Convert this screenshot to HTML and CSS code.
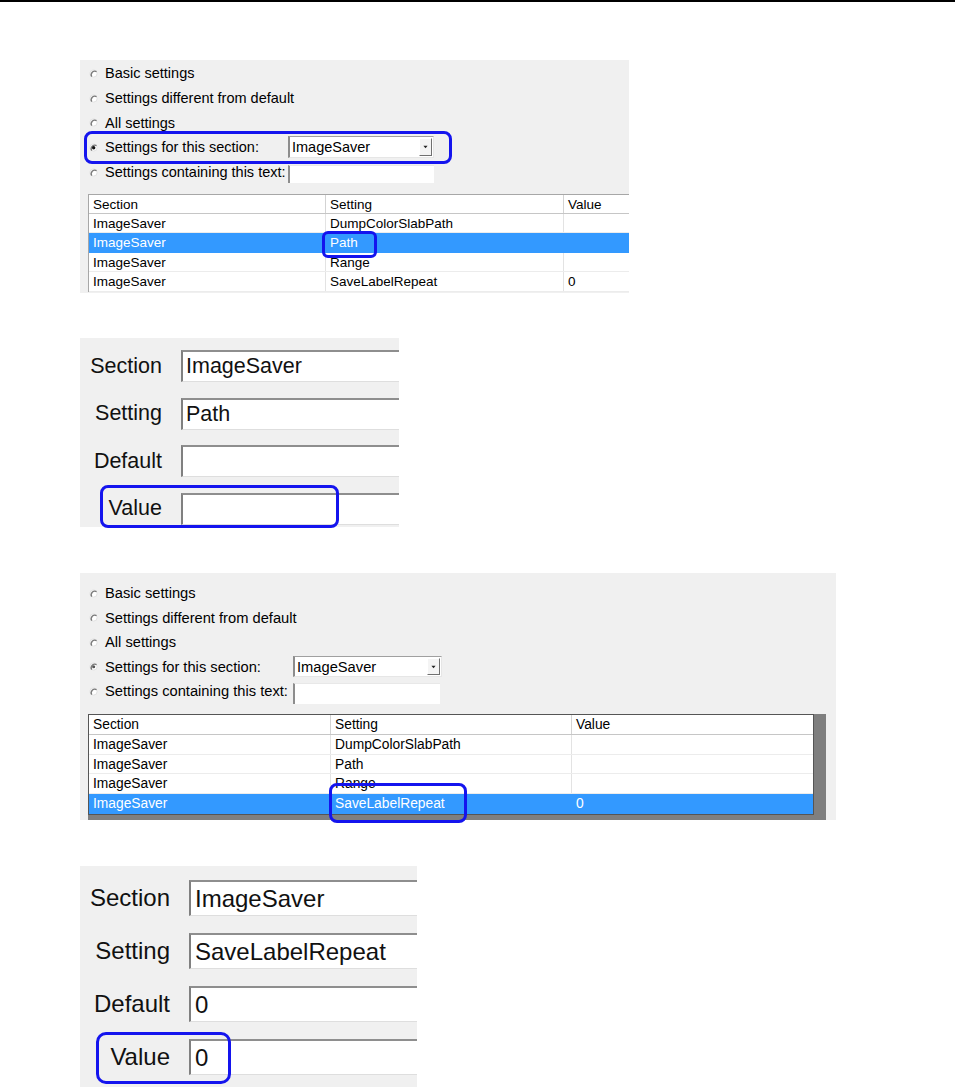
FILE: index.html
```html
<!DOCTYPE html>
<html lang="en">
<head>
<meta charset="utf-8">
<title>Settings</title>
<link rel="stylesheet" href="styles.css">
</head>
<body>
<div class="rule"></div>
<main class="page">

  <section class="panel list-panel p1">
    <ul class="radios">
      <li class="radio-row"><svg class="radio" viewBox="0 0 10 10"><circle cx="5" cy="5" r="4" fill="#fff" stroke="#e0e0e0"/><path d="M3 8.5A4 4 0 0 1 8.4 3" fill="none" stroke="#7a7a7a" stroke-width="1.5"/></svg><span>Basic settings</span></li>
      <li class="radio-row"><svg class="radio" viewBox="0 0 10 10"><circle cx="5" cy="5" r="4" fill="#fff" stroke="#e0e0e0"/><path d="M3 8.5A4 4 0 0 1 8.4 3" fill="none" stroke="#7a7a7a" stroke-width="1.5"/></svg><span>Settings different from default</span></li>
      <li class="radio-row"><svg class="radio" viewBox="0 0 10 10"><circle cx="5" cy="5" r="4" fill="#fff" stroke="#e0e0e0"/><path d="M3 8.5A4 4 0 0 1 8.4 3" fill="none" stroke="#7a7a7a" stroke-width="1.5"/></svg><span>All settings</span></li>
      <li class="radio-row"><svg class="radio" viewBox="0 0 10 10"><circle cx="5" cy="5" r="4" fill="#fff" stroke="#e0e0e0"/><path d="M3 8.5A4 4 0 0 1 8.4 3" fill="none" stroke="#7a7a7a" stroke-width="1.5"/><circle cx="5.2" cy="5.2" r="1.9" fill="#111"/></svg><span class="rlabel">Settings for this section:</span><div class="combo"><span class="combo-text">ImageSaver</span><span class="combo-btn"><svg viewBox="0 0 6 4"><path d="M0.5 0.5h5L3 3.5z" fill="#222"/></svg></span></div></li>
      <li class="radio-row"><svg class="radio" viewBox="0 0 10 10"><circle cx="5" cy="5" r="4" fill="#fff" stroke="#e0e0e0"/><path d="M3 8.5A4 4 0 0 1 8.4 3" fill="none" stroke="#7a7a7a" stroke-width="1.5"/></svg><span class="rlabel">Settings containing this text:</span><div class="textbox"></div></li>
    </ul>
    <div class="listview">
      <div class="lv-row lv-head"><span>Section</span><span>Setting</span><span>Value</span></div>
      <div class="lv-row"><span>ImageSaver</span><span>DumpColorSlabPath</span><span></span></div>
      <div class="lv-row selected"><span>ImageSaver</span><span>Path</span><span></span></div>
      <div class="lv-row"><span>ImageSaver</span><span>Range</span><span></span></div>
      <div class="lv-row"><span>ImageSaver</span><span>SaveLabelRepeat</span><span>0</span></div>
    </div>
    <div class="mark mark-p1-combo"></div>
    <div class="mark mark-p1-path"></div>
  </section>

  <section class="panel field-panel p2">
    <label class="flabel">Section</label><div class="field">ImageSaver</div>
    <label class="flabel">Setting</label><div class="field">Path</div>
    <label class="flabel">Default</label><div class="field"></div>
    <label class="flabel">Value</label><div class="field"></div>
    <div class="mark mark-p2"></div>
  </section>

  <section class="panel list-panel p3">
    <ul class="radios">
      <li class="radio-row"><svg class="radio" viewBox="0 0 10 10"><circle cx="5" cy="5" r="4" fill="#fff" stroke="#e0e0e0"/><path d="M3 8.5A4 4 0 0 1 8.4 3" fill="none" stroke="#7a7a7a" stroke-width="1.5"/></svg><span>Basic settings</span></li>
      <li class="radio-row"><svg class="radio" viewBox="0 0 10 10"><circle cx="5" cy="5" r="4" fill="#fff" stroke="#e0e0e0"/><path d="M3 8.5A4 4 0 0 1 8.4 3" fill="none" stroke="#7a7a7a" stroke-width="1.5"/></svg><span>Settings different from default</span></li>
      <li class="radio-row"><svg class="radio" viewBox="0 0 10 10"><circle cx="5" cy="5" r="4" fill="#fff" stroke="#e0e0e0"/><path d="M3 8.5A4 4 0 0 1 8.4 3" fill="none" stroke="#7a7a7a" stroke-width="1.5"/></svg><span>All settings</span></li>
      <li class="radio-row"><svg class="radio" viewBox="0 0 10 10"><circle cx="5" cy="5" r="4" fill="#fff" stroke="#e0e0e0"/><path d="M3 8.5A4 4 0 0 1 8.4 3" fill="none" stroke="#7a7a7a" stroke-width="1.5"/><circle cx="5.2" cy="5.2" r="1.7" fill="#555"/></svg><span class="rlabel">Settings for this section:</span><div class="combo"><span class="combo-text">ImageSaver</span><span class="combo-btn"><svg viewBox="0 0 6 4"><path d="M0.5 0.5h5L3 3.5z" fill="#222"/></svg></span></div></li>
      <li class="radio-row"><svg class="radio" viewBox="0 0 10 10"><circle cx="5" cy="5" r="4" fill="#fff" stroke="#e0e0e0"/><path d="M3 8.5A4 4 0 0 1 8.4 3" fill="none" stroke="#7a7a7a" stroke-width="1.5"/></svg><span class="rlabel">Settings containing this text:</span><div class="textbox"></div></li>
    </ul>
    <div class="listview">
      <div class="lv-inner">
        <div class="lv-row lv-head"><span>Section</span><span>Setting</span><span>Value</span></div>
        <div class="lv-row"><span>ImageSaver</span><span>DumpColorSlabPath</span><span></span></div>
        <div class="lv-row"><span>ImageSaver</span><span>Path</span><span></span></div>
        <div class="lv-row"><span>ImageSaver</span><span>Range</span><span></span></div>
        <div class="lv-row selected"><span>ImageSaver</span><span>SaveLabelRepeat</span><span>0</span></div>
      </div>
    </div>
    <div class="mark mark-p3"></div>
  </section>

  <section class="panel field-panel p4">
    <label class="flabel">Section</label><div class="field">ImageSaver</div>
    <label class="flabel">Setting</label><div class="field">SaveLabelRepeat</div>
    <label class="flabel">Default</label><div class="field">0</div>
    <label class="flabel">Value</label><div class="field">0</div>
    <div class="mark mark-p4"></div>
  </section>

</main>
</body>
</html>
```

FILE: styles.css
```css
html, body {
  margin: 0;
  padding: 0;
  background: #ffffff;
}

body {
  width: 955px;
  height: 1087px;
  overflow: hidden;
  font-family: "Liberation Sans", Arial, sans-serif;
  color: #000;
}

.rule {
  height: 2px;
  background: #000;
}

.page {
  display: flex;
  flex-direction: column;
  align-items: flex-start;
  padding-left: 80px;
}

.panel {
  position: relative;
  background: #f0f0f0;
  box-sizing: border-box;
}

/* ---------- list panels ---------- */
.list-panel {
  display: flex;
  flex-direction: column;
  padding-left: 8px;
}

.p1 {
  margin-top: 58px;
  width: 549px;
  height: 233px;
  padding-top: 1px;
  font-size: 14.5px;
}

.p3 {
  margin-top: 46px;
  width: 756px;
  height: 247px;
  padding-top: 8px;
  padding-right: 10px;
  font-size: 14.7px;
}

.radios {
  list-style: none;
  margin: 0;
  padding: 0;
}

.radio-row {
  display: flex;
  align-items: center;
  height: 24.7px;
  padding-left: 1px;
  white-space: nowrap;
}

.p3 .radio-row {
  height: 24.5px;
}

.radio {
  width: 9px;
  height: 9px;
  margin-right: 7px;
  flex: none;
}

.rlabel {
  width: 183px;
  flex: none;
  overflow: hidden;
}

.p3 .rlabel {
  width: 188px;
}

.combo {
  box-sizing: border-box;
  width: 146px;
  height: 22px;
  background: #fff;
  border-top: 1px solid #a0a0a0;
  border-left: 2px solid #8d8d8d;
  border-bottom: 1px solid #e6e6e6;
  border-right: 1px solid #e6e6e6;
  display: flex;
  align-items: center;
  justify-content: space-between;
  padding-left: 2px;
  padding-right: 1px;
}

.p3 .combo {
  width: 149px;
  height: 21px;
}

.combo-btn {
  box-sizing: border-box;
  width: 13px;
  height: 18px;
  background: #f4f4f4;
  border-top: 1px solid #fff;
  border-left: 1px solid #fff;
  border-right: 1px solid #707070;
  border-bottom: 1px solid #707070;
  display: flex;
  align-items: center;
  justify-content: center;
}

.p3 .combo-btn {
  height: 17px;
}

.combo-btn svg {
  width: 5px;
  height: 4px;
}

.textbox {
  box-sizing: border-box;
  width: 146px;
  height: 18px;
  margin-top: 3px;
  background: #fff;
  border-left: 2px solid #8d8d8d;
  border-top: 1px solid #e8e8e8;
}

.p3 .textbox {
  width: 147px;
  height: 21px;
  margin-top: 5px;
}

/* list view */
.listview {
  box-sizing: border-box;
  background: #fff;
  border-top: 1px solid #a7a7a7;
  border-left: 1px solid #a7a7a7;
  font-size: 13.5px;
}

.p1 .listview {
  margin-top: 9.5px;
}

.p3 .listview {
  margin-top: 10.5px;
  width: 738px;
  background: #7f7f7f;
  border: none;
  padding-right: 12px;
  padding-bottom: 5px;
  font-size: 13.8px;
}

.lv-inner {
  background: #fff;
  border: 1px solid #555;
}

.lv-row {
  display: grid;
  grid-template-columns: 237px 238px 1fr;
  height: 19.5px;
  box-sizing: border-box;
  border-bottom: 1px solid #ececec;
  line-height: 20px;
  white-space: nowrap;
}

.p3 .lv-row {
  grid-template-columns: 242px 241px 1fr;
  height: 19.8px;
}

.lv-row span {
  padding-left: 4px;
  border-right: 1px solid #e3e3e3;
  overflow: hidden;
}

.lv-row span:last-child {
  border-right: none;
}

.lv-head {
  height: 19px;
  border-bottom: 1px solid #c6c6c6;
  line-height: 20px;
}

.lv-head span {
  border-right: 1px solid #d3d3d3;
}

.lv-row.selected {
  background: #3399ff;
  color: #fff;
  border-bottom-color: #3399ff;
}

.lv-row.selected span {
  border-right-color: #3399ff;
}

.p3 .lv-row:last-child {
  border-bottom: none;
}

/* ---------- field panels ---------- */
.field-panel {
  display: grid;
  align-content: start;
  align-items: center;
}

.p2 {
  margin-top: 45px;
  width: 319px;
  height: 189px;
  padding-top: 12px;
  grid-template-columns: 82px 1fr;
  column-gap: 19px;
  row-gap: 15.5px;
  grid-auto-rows: 32px;
  font-size: 21.5px;
}

.p4 {
  margin-top: 46px;
  width: 337px;
  height: 221px;
  padding-top: 14px;
  grid-template-columns: 90px 1fr;
  column-gap: 19px;
  row-gap: 17px;
  grid-auto-rows: 36px;
  font-size: 24px;
}

.flabel {
  text-align: right;
  white-space: nowrap;
  color: #111;
}

.field {
  box-sizing: border-box;
  height: 100%;
  background: #fff;
  border-top: 2px solid #8e8e8e;
  border-left: 2px solid #808080;
  border-bottom: 1px solid #dedede;
  display: flex;
  align-items: center;
  padding-left: 3px;
  white-space: nowrap;
  color: #111;
}

.p4 .field {
  padding-left: 4px;
}

/* ---------- blue annotation marks ---------- */
.mark {
  position: absolute;
  box-sizing: border-box;
  border: 3px solid #1414ee;
  border-radius: 8px;
  pointer-events: none;
}

.mark-p1-combo { left: 4px; top: 71px; width: 368px; height: 33px; }
.mark-p1-path { left: 242px; top: 171px; width: 55px; height: 27px; border-radius: 6px; }
.mark-p2 { left: 20px; top: 147px; width: 239px; height: 43px; }
.mark-p3 { left: 249px; top: 210px; width: 138px; height: 40px; }
.mark-p4 { left: 16px; top: 166px; width: 135px; height: 52px; border-radius: 10px; }
```
